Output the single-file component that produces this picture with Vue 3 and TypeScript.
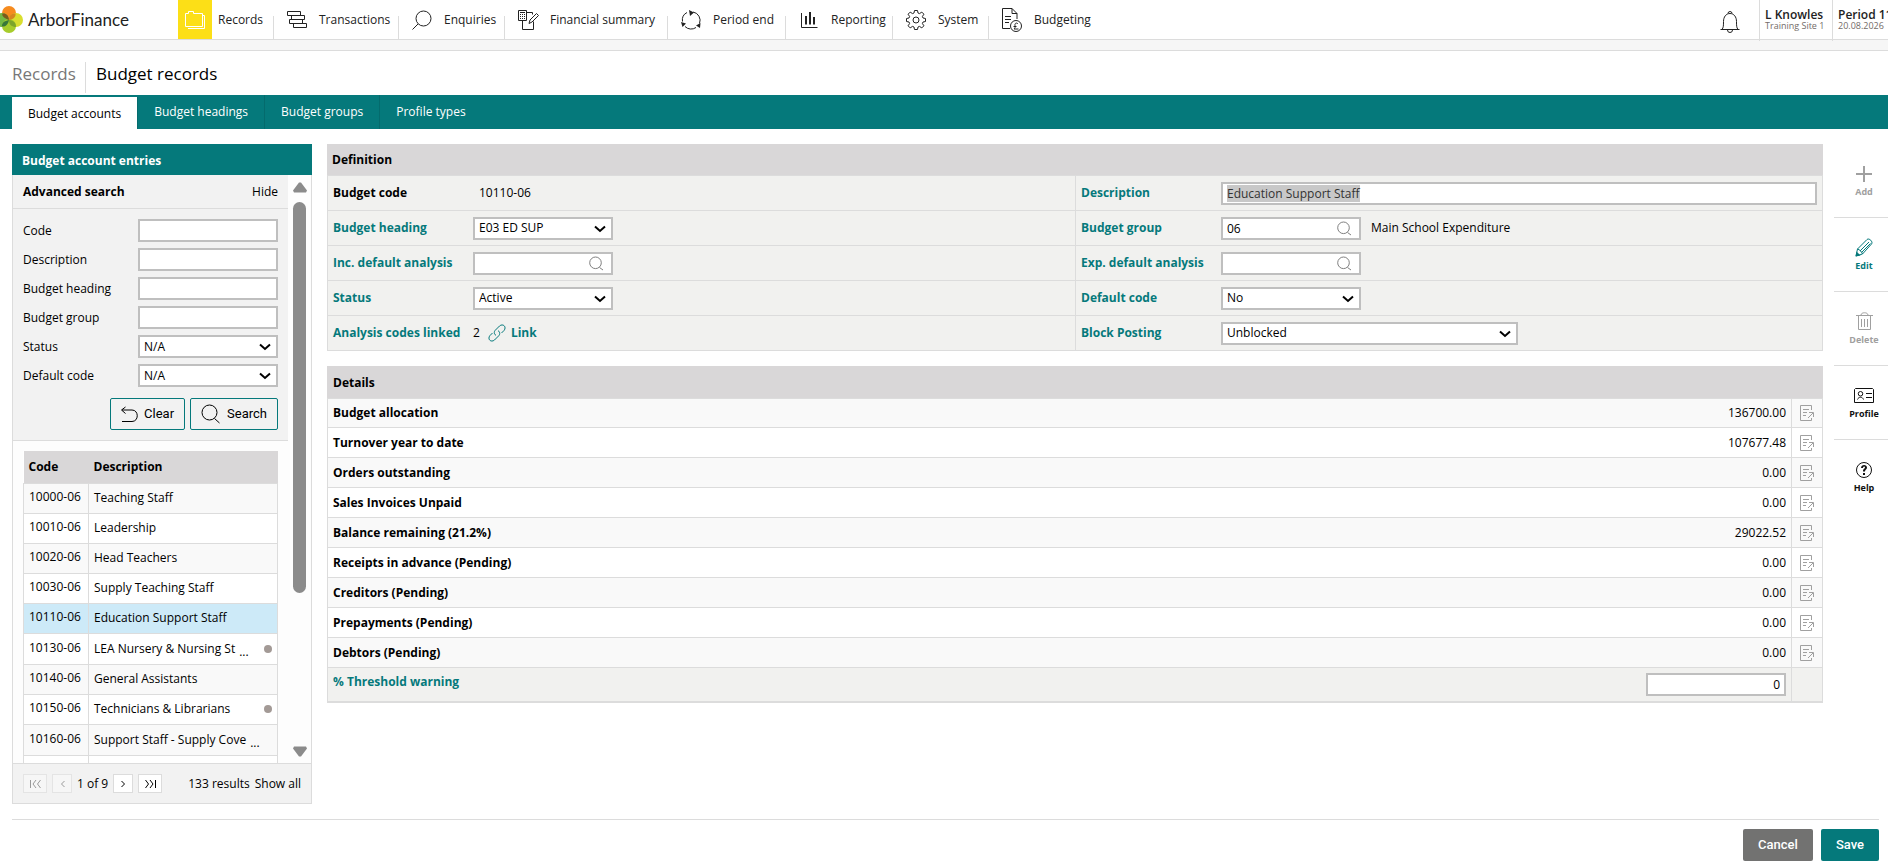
<script setup lang="ts">
import { h, onMounted, ref } from 'vue'

interface Icon { size: [number, number]; lines?: string; fills?: string }

const icons: Record<string, Icon> = {
  records: { size: [20, 18], lines: 'M.5 15.5V2.5h3v-2h5v2h9v13zM3 17.5h16.5V4.5h-2' },
  transactions: { size: [21, 17], lines: 'M.5.5h13v4h-13zM4.5 4.5h13v4h-13zM2.5 8.5h13v4h-13zM6.5 12.5h13v4h-13z' },
  enquiries: { size: [20, 20], lines: 'M11.5 1a7.5 7.5 0 1 1 0 15a7.5 7.5 0 0 1 0-15M6 14L.5 19.5' },
  summary: { size: [21, 20], lines: 'M.5.5h8v10h-8zM2 2.5h5M2 4.5h1M4 4.5h1M6 4.5h1M2 6.5h1M4 6.5h1M6 6.5h1M2 8.5h1M4 8.5h1M6 8.5h1M8.5 2.5h6v2M4.5 10.5v9h11v-8M11 13.5l1-3.5 6.5-6.5 2 2-6.500 6.500z' },
  period: { size: [20, 20], lines: 'M6 2.500a8.500 8.500 0 0 0-4.500 9M4 16.500a8.500 8.500 0 0 0 11 1M18.500 13.500a8.500 8.500 0 0 0-6.500-11.500', fills: 'M8 0l5 2.500L9 6zM0 12l5 1.500L1.500 17zM19.500 13l-.5 5-4-2.500z' },
  reporting: { size: [17, 16], lines: 'M.5 1v14.5H16.5', fills: 'M4 4h2v8.5H4zM8 0h2v12.5H8zM12 5h2v7.5h-2z' },
  system: { size: [20, 20], lines: 'M8.5.5h3l.5 2.500 1.500.6 2.300-1.500 2.100 2.100-1.500 2.300.6 1.500 2.500.5v3l-2.500.5-.6 1.500 1.500 2.300-2.100 2.100-2.300-1.500-1.500.6-.5 2.500h-3l-.5-2.500-1.500-.6-2.300 1.500-2.100-2.100 1.500-2.300-.6-1.500-2.500-.5v-3l2.500-.5.6-1.500-1.500-2.300 2.100-2.100 2.300 1.500 1.500-.6zM10 7a3 3 0 1 1 0 6a3 3 0 0 1 0-6' },
  budgeting: { size: [20, 24], lines: 'M8 20.5H.5V.5H10l5 5v5.500M10 .5v5h5M3 8.500h6M3 11.500h6M3 14.500h4M14 12.500a5.500 5.500 0 1 1 0 11a5.500 5.500 0 0 1 0-11M16 16c-1.500-2-3.500-.5-3 1.500.5 1.500 0 2.500-1 3.500h4.500M11.500 18.500h3' },
  bell: { size: [20, 24], lines: 'M.5 19.5h19M2 19.5c1.5-2 1.5-4 1.5-8C3.500 7 6 3.500 10 3.500S16.500 7 16.500 11.500c0 4 0 6 1.500 8M8 3.500a2 2 0 1 1 4 0M7.500 20a2.500 2.500 0 0 0 5 0' },
  add: { size: [16, 16], fills: 'M7 0h2v7h7v2H9v7H7V9H0V7h7z' },
  edit: { size: [19, 19], lines: 'M1 18l1.5-7L12 1.500c2-2 6.500 2.500 4.500 4.500L7.500 16zM2.500 11c2 .5 4.500 3 5 5M5 13l9-9M6.500 14.500l9-9', fills: 'M.5 18.500l1-5 4 4z' },
  delete: { size: [17, 19], lines: 'M0 3.5h17M5 3c0-3 7-3 7 0M2.5 4v13.5h12V4M5.5 7v8M8.5 7v8M11.5 7v8' },
  profile: { size: [20, 16], lines: 'M1.5.5h17l1 1v13h-19v-13zM6.5 3.5a2 2 0 1 1 0 4.5a2 2 0 0 1 0-4.5M3.5 11.5c1-3 5-3 6 0M12 5.5h6M12 9.5h6' },
  help: { size: [16, 16], lines: 'M8 .5a7.5 7.5 0 1 1 0 15a7.5 7.5 0 0 1 0-15', fills: 'M5 6c0-4 6-4 6-.5 0 2-2 2-2 4H7c0-3 2-3 2-4 0-1.500-2-1-2 .5zM7 11h2v2H7z' },
  undo: { size: [17, 16], lines: 'M4.5 1L.5 4l4 3.500M1 4h10c7 0 7 11.500 0 11.500H1' },
  search: { size: [20, 20], lines: 'M8.5 1a7.500 7.500 0 1 1 0 15a7.500 7.500 0 0 1 0-15M13.500 14.500l5 4.500' },
  lookup: { size: [15, 15], lines: 'M6.5 1a5.800 5.800 0 1 1 0 11.600a5.800 5.800 0 0 1 0-11.600M10.500 11.500l3.500 2.500' },
  link: { size: [18, 18], lines: 'M8 11.500C5.500 9.500 6 7.500 7.500 6l4-4c3.500-3 7.500 1 4.500 4.500l-2.500 2.500M10 6.500c2.500 2 2 4 .5 5.500l-4 4c-3.500 3-7.500-1-4.500-4.500l2.500-2.500' },
  note: { size: [14, 16], lines: 'M11.5 5V.5H.5v15H11.5V13M3 4.5h6M3 7.5h4M3 10.5h3M8 13l5-5M9 7.5h4.500v4.500' },
  chevron: { size: [12, 8], lines: 'M1 1.5l5 4.500 5-4.500' },
  up: { size: [14, 11], fills: 'M6 .5h2l6 8-1 2H1l-1-2z' },
  down: { size: [14, 11], fills: 'M6 10.5h2l6-8-1-2H1l-1 2z' },
  first: { size: [11, 10], lines: 'M.5 1v8M6 1L3 5l3 4M10.500 1l-3 4 3 4' },
  previous: { size: [5, 8], lines: 'M4.5 1l-3 3 3 3' },
  next: { size: [5, 8], lines: 'M.5 1l3 3-3 3' },
  last: { size: [11, 10], lines: 'M10.5 1v8M5 1l3 4-3 4M.5 1l3 4-3 4' },
}

const Glyph = (props: { name: string }) => {
  const { size: [width, height], lines, fills } = icons[props.name]
  return h('svg', { width, height, viewBox: `0 0 ${width} ${height}`, fill: 'none', 'aria-hidden': 'true', class: 'glyph' }, [
    lines ? h('path', { d: lines, stroke: 'currentColor' }) : null,
    fills ? h('path', { d: fills, fill: 'currentColor' }) : null,
  ])
}
Glyph.props = ['name']

const nav = [
  { icon: 'records', label: 'Records', active: true },
  { icon: 'transactions', label: 'Transactions' },
  { icon: 'enquiries', label: 'Enquiries' },
  { icon: 'summary', label: 'Financial summary' },
  { icon: 'period', label: 'Period end' },
  { icon: 'reporting', label: 'Reporting' },
  { icon: 'system', label: 'System' },
  { icon: 'budgeting', label: 'Budgeting' },
]
const tabs = ['Budget accounts', 'Budget headings', 'Budget groups', 'Profile types']
const filters = [
  { id: 'f-code', label: 'Code' },
  { id: 'f-description', label: 'Description' },
  { id: 'f-heading', label: 'Budget heading' },
  { id: 'f-group', label: 'Budget group' },
  { id: 'f-status', label: 'Status', option: 'N/A' },
  { id: 'f-default', label: 'Default code', option: 'N/A' },
]
const accounts = [
  { code: '10000-06', name: 'Teaching Staff' },
  { code: '10010-06', name: 'Leadership' },
  { code: '10020-06', name: 'Head Teachers' },
  { code: '10030-06', name: 'Supply Teaching Staff' },
  { code: '10110-06', name: 'Education Support Staff', selected: true },
  { code: '10130-06', name: 'LEA Nursery & Nursing St', cut: true, dot: true },
  { code: '10140-06', name: 'General Assistants' },
  { code: '10150-06', name: 'Technicians & Librarians', dot: true },
  { code: '10160-06', name: 'Support Staff - Supply Cove', cut: true },
  { code: '', name: '' },
]
const details = [
  ['Budget allocation', '136700.00'],
  ['Turnover year to date', '107677.48'],
  ['Orders outstanding', '0.00'],
  ['Sales Invoices Unpaid', '0.00'],
  ['Balance remaining (21.2%)', '29022.52'],
  ['Receipts in advance (Pending)', '0.00'],
  ['Creditors (Pending)', '0.00'],
  ['Prepayments (Pending)', '0.00'],
  ['Debtors (Pending)', '0.00'],
]
const actions = [
  { icon: 'add', label: 'Add', tone: 'muted' },
  { icon: 'edit', label: 'Edit', tone: 'teal' },
  { icon: 'delete', label: 'Delete', tone: 'muted' },
  { icon: 'profile', label: 'Profile', tone: 'dark' },
  { icon: 'help', label: 'Help', tone: 'dark' },
]

const description = ref('Education Support Staff')
const group = ref('06')
const threshold = ref('0')
const descriptionInput = ref<HTMLInputElement | null>(null)

onMounted(() => {
  descriptionInput.value?.focus()
  descriptionInput.value?.select()
})
</script>

<template>
  <div class="app">
    <header class="topbar">
      <a class="brand" href="#">
        <svg class="logo" width="23" height="28" viewBox="0 0 23 28" aria-hidden="true">
          <circle cx="9" cy="7" r="7" fill="#f68b1f" />
          <circle cx="2" cy="14" r="7" fill="#72b844" />
          <circle cx="16" cy="14" r="7" fill="#d9de2f" />
          <circle cx="9" cy="20" r="7" fill="#a7cc2c" />
          <path d="M9 14C3 12 1.500 9 2.500 7.500 6 7 8.500 9 9 14z" fill="#7a5a1c" />
          <path d="M9 14c0-5 3-7 6.500-6.500C16 11 13 13.500 9 14z" fill="#d6851f" />
          <path d="M9 14c-1 5-4 7-7 6.500C1.500 17 4 15 9 14z" fill="#37773a" />
          <path d="M9 14c5 .5 7 3 7 7-4 0-7-2-7-7z" fill="#7da52a" />
        </svg>
        <span>ArborFinance</span>
      </a>
      <nav class="nav">
        <a v-for="item in nav" :key="item.label" href="#" :class="{ active: item.active }">
          <span class="nav-icon"><Glyph :name="item.icon" /></span>
          <span>{{ item.label }}</span>
        </a>
      </nav>
      <div class="account">
        <button class="bell" type="button" aria-label="Notifications"><Glyph name="bell" /></button>
        <div class="user"><strong>L Knowles</strong><small>Training Site 1</small></div>
        <div class="user"><strong>Period 11</strong><small>20.08.2026</small></div>
      </div>
    </header>
    <div class="strip"></div>

    <div class="crumbs"><a href="#">Records</a><h1>Budget records</h1></div>
    <nav class="tabs">
      <a v-for="(tab, i) in tabs" :key="tab" href="#" :class="{ current: i === 0 }">{{ tab }}</a>
    </nav>

    <main class="content">
      <aside class="entries">
        <h2>Budget account entries</h2>
        <div class="scroller">
          <div class="scrolled">
            <form class="search" @submit.prevent>
              <div class="search-head"><strong>Advanced search</strong><a href="#">Hide</a></div>
              <div class="filters">
                <template v-for="f in filters" :key="f.id">
                  <label :for="f.id">{{ f.label }}</label>
                  <span v-if="f.option" class="field pick">
                    <select :id="f.id"><option>{{ f.option }}</option></select><Glyph name="chevron" />
                  </span>
                  <span v-else class="field"><input :id="f.id" type="text" /></span>
                </template>
              </div>
              <div class="buttons">
                <button type="reset"><Glyph name="undo" />Clear</button>
                <button type="submit"><Glyph name="search" />Search</button>
              </div>
            </form>
            <table class="accounts">
              <thead><tr><th>Code</th><th>Description</th></tr></thead>
              <tbody>
                <tr v-for="a in accounts" :key="a.code" :class="{ selected: a.selected, cut: a.cut }">
                  <td>{{ a.code }}</td>
                  <td>
                    <div class="name">
                      <span>{{ a.name }}</span><span v-if="a.cut" class="more">...</span><i v-if="a.dot" class="dot"></i>
                    </div>
                  </td>
                </tr>
              </tbody>
            </table>
          </div>
          <div class="bar"><Glyph name="up" /><span class="thumb"></span><Glyph name="down" /></div>
        </div>
        <div class="pager">
          <button type="button" disabled aria-label="First page" class="wide"><Glyph name="first" /></button>
          <button type="button" disabled aria-label="Previous page"><Glyph name="previous" /></button>
          <span>1 of 9</span>
          <button type="button" aria-label="Next page"><Glyph name="next" /></button>
          <button type="button" aria-label="Last page" class="wide"><Glyph name="last" /></button>
          <span class="results">133 results</span><a href="#">Show all</a>
        </div>
      </aside>

      <div class="record">
        <section class="panel">
          <h2>Definition</h2>
          <div class="definition">
            <div class="cell"><span class="label plain">Budget code</span><span class="value">10110-06</span></div>
            <div class="cell">
              <label class="label" for="description">Description</label>
              <span class="field grow"><input id="description" ref="descriptionInput" v-model="description" type="text" /></span>
            </div>
            <div class="cell">
              <label class="label" for="heading">Budget heading</label>
              <span class="field pick"><select id="heading"><option>E03 ED SUP</option></select><Glyph name="chevron" /></span>
            </div>
            <div class="cell">
              <label class="label" for="group">Budget group</label>
              <span class="field look"><input id="group" v-model="group" type="text" /><Glyph name="lookup" /></span>
              <span class="note">Main School Expenditure</span>
            </div>
            <div class="cell">
              <label class="label" for="income">Inc. default analysis</label>
              <span class="field look"><input id="income" type="text" /><Glyph name="lookup" /></span>
            </div>
            <div class="cell">
              <label class="label" for="expense">Exp. default analysis</label>
              <span class="field look"><input id="expense" type="text" /><Glyph name="lookup" /></span>
            </div>
            <div class="cell">
              <label class="label" for="status">Status</label>
              <span class="field pick"><select id="status"><option>Active</option></select><Glyph name="chevron" /></span>
            </div>
            <div class="cell">
              <label class="label" for="default">Default code</label>
              <span class="field pick"><select id="default"><option>No</option></select><Glyph name="chevron" /></span>
            </div>
            <div class="cell">
              <span class="label">Analysis codes linked</span><span>2</span>
              <a class="link" href="#"><Glyph name="link" />Link</a>
            </div>
            <div class="cell">
              <label class="label" for="posting">Block Posting</label>
              <span class="field pick long"><select id="posting"><option>Unblocked</option></select><Glyph name="chevron" /></span>
            </div>
          </div>
        </section>

        <section class="panel">
          <h2 class="tall">Details</h2>
          <table class="details">
            <tbody>
              <tr v-for="row in details" :key="row[0]">
                <th scope="row">{{ row[0] }}</th>
                <td>{{ row[1] }}</td>
                <td class="tool"><button type="button" :aria-label="`Open ${row[0]}`"><Glyph name="note" /></button></td>
              </tr>
              <tr class="threshold">
                <th scope="row"><label for="threshold">% Threshold warning</label></th>
                <td><span class="field number"><input id="threshold" v-model="threshold" type="text" /></span></td>
                <td class="tool"></td>
              </tr>
            </tbody>
          </table>
        </section>
      </div>

      <div class="actions">
        <button v-for="a in actions" :key="a.label" type="button" :class="a.tone">
          <span class="action-icon"><Glyph :name="a.icon" /></span>{{ a.label }}
        </button>
      </div>
    </main>

    <footer class="footer">
      <button type="button" class="cancel">Cancel</button>
      <button type="button" class="save">Save</button>
    </footer>
  </div>
</template>

<style>
body { background: #fff; }
</style>

<style scoped>
.app { font: 12px/18px "Open Sans", "Noto Sans", sans-serif; color: #000; overflow: hidden; }
.app, .app * { box-sizing: border-box; }
a { color: inherit; text-decoration: none; }
button, input, select { font: inherit; color: inherit; margin: 0; }
button { cursor: pointer; }
h1, h2 { margin: 0; font-size: 12px; line-height: 18px; }
.glyph { flex: none; display: block; }

.topbar { display: flex; height: 40px; border-bottom: 1px solid #dcdcdc; }
.brand { width: 178px; flex: none; display: flex; align-items: center; gap: 5px; font: 17px/24px Lato, sans-serif; color: #222; }
.nav { display: grid; grid-template-columns: 96px 125px 106px 163px 118px 107px 96px 110px; color: #222; }
.nav a { display: flex; align-items: center; position: relative; white-space: nowrap; }
.nav a:not(:last-child)::after { content: ""; position: absolute; right: 0; bottom: 0; height: 23px; width: 1px; background: #dcdcdc; }
.nav-icon { width: 34px; height: 39px; margin-right: 11px; padding-left: 12px; display: flex; align-items: center; justify-content: center; flex: none; }
.active .nav-icon { background: #fcdf17; color: #fff; margin-right: 6px; padding: 0; }
.account { margin-left: auto; display: flex; flex: none; width: 188px; color: #222; }
.bell { border: 0; background: none; width: 59px; flex: none; padding: 4px 19px 0 20px; display: flex; align-items: center; }
.user { width: 73px; flex: none; border-left: 1px solid #dcdcdc; padding: 8px 0 0 5px; white-space: nowrap; height: 41px; }
.user strong, .user small { display: block; }
.user strong { font-size: 12px; line-height: 13px; font-weight: 600; }
.user small { font-size: 9px; line-height: 10px; color: #736b68; }
.strip { height: 11px; background: #f6f6f6; border-bottom: 1px solid #dcdcdc; }

.crumbs { display: flex; align-items: stretch; height: 44px; padding: 11px 12px 2px; font-size: 17px; color: #777; line-height: 24px; }
.crumbs h1 { font-size: 17px; line-height: 24px; font-weight: 400; color: #000; }
.crumbs a { width: 74px; border-right: 1px solid #dcdcdc; margin-right: 10px; }

.tabs { display: flex; height: 34px; background: #05797b; padding-left: 12px; color: #fff; }
.tabs a { padding: 0 16px; line-height: 34px; border-right: 1px solid #046b6d; }
.tabs a:last-child { border: 0; }
.tabs .current { background: #fff; color: #000; margin-top: 2px; }

.content { display: flex; align-items: flex-start; padding-top: 15px; }
.entries { width: 300px; flex: none; margin: 0 15px 15px 12px; border: 1px solid #dcdcdc; border-top: 0; background: #fdfdfd; }
.entries h2 { background: #05797b; color: #fff; margin: 0 -1px; padding: 8px 10px 5px; font-weight: 700; }
.scroller { display: flex; height: 588px; overflow: hidden; }
.scrolled { width: 275px; }
.search { background: #f2f2f2; border-bottom: 1px solid #dcdcdc; padding-bottom: 10px; }
.search-head { display: flex; justify-content: space-between; padding: 8px 10px 7px; border-bottom: 1px solid #dcdcdc; }
.filters { display: grid; grid-template-columns: 115px 140px; row-gap: 6px; padding: 10px 10px 11px; align-items: center; }
.buttons { display: flex; justify-content: flex-end; gap: 5px; padding-right: 10px; font: 13px/18px Roboto, sans-serif; }
.buttons button { height: 32px; border: 1px solid #05797b; border-radius: 2px; background: #f2f2f2; padding: 0 10px; display: flex; align-items: center; gap: 6px; }

.field { display: block; position: relative; width: 140px; height: 23px; flex: none; }
.field input, .field select { width: 100%; height: 100%; border: 2px solid #bfbfbf; border-radius: 0; background: #fff; padding: 0 4px; outline: 0; display: block; appearance: none; }
.field input::selection { background: #c8c8c8; color: #333; }
.pick .glyph { position: absolute; right: 7px; top: 8px; pointer-events: none; stroke-width: 2; }
.look .glyph { position: absolute; right: 9px; top: 4px; color: #808080; }
.field.long { width: 297px; }
.field.grow { width: auto; flex: 1; }
.field.number { margin-left: auto; }
.field.number input { text-align: right; }

.accounts { width: 255px; margin: 10px 0 0 10px; border-collapse: collapse; table-layout: fixed; background: #fff; }
.accounts th { background: #d9d7d8; text-align: left; height: 32px; padding: 0 5px; font-weight: 700; }
.accounts th:first-child { width: 65px; }
.accounts td { border: 1px solid #dcdcdc; height: 30px; padding: 0 5px; white-space: nowrap; }
.accounts td:first-child { padding-bottom: 2px; }
.accounts .cut td { height: 31px; }
.accounts tbody tr:nth-child(odd) { background: #f9f9f9; }
.accounts tbody tr.selected { background: #cdeaf8; }
.name { display: flex; align-items: center; }
.more { margin-left: 4px; padding-top: 6px; line-height: 12px; }
.dot { width: 8px; height: 8px; border-radius: 50%; background: #a39a96; margin-left: auto; }
.bar { width: 23px; padding: 7px 4px 6px; display: flex; flex-direction: column; align-items: center; color: #8b8b8b; }
.thumb { width: 13px; height: 391px; border-radius: 7px; background: #8b8b8b; margin: 9px 0 auto; }
.pager { display: flex; align-items: center; gap: 5px; height: 40px; border-top: 1px solid #dcdcdc; background: #f2f2f2; padding: 0 10px; white-space: nowrap; }
.pager button { width: 20px; height: 19px; border: 1px solid #dcdcdc; background: #fff; padding: 0; display: flex; align-items: center; justify-content: center; }
.pager button.wide { width: 24px; }
.pager button:disabled { background: #f6f6f6; color: #999; border-color: #e4e4e4; }
.pager .results { margin-left: auto; }

.record { flex: 1; min-width: 0; }
.panel { margin-bottom: 15px; border: 1px solid #dcdcdc; border-top: 0; }
.panel h2 { background: #d9d7d8; margin: 0 -1px; padding: 7px 5px 6px; font-weight: 700; }
.panel h2.tall { padding: 8px 6px 6px; }
.definition { display: grid; grid-template-columns: 1fr 1fr; background: #f1f1ef; }
.cell { display: flex; align-items: center; border-top: 1px solid #dcdcdc; height: 35px; padding: 0 5px; }
.cell:nth-child(even) { border-left: 1px solid #dcdcdc; }
.cell .label { width: 140px; flex: none; }
.label, .threshold th { color: #05797b; font-weight: 700; white-space: nowrap; }
.label.plain { color: #000; }
.cell .value { padding-left: 6px; }
.note { margin-left: 10px; }
.link { display: flex; align-items: center; gap: 5px; color: #05797b; font-weight: 700; margin-left: 8px; }

.details { width: 100%; border-collapse: collapse; }
.details th, .details td { border-top: 1px solid #dcdcdc; height: 30px; padding: 0 5px; text-align: left; vertical-align: middle; }
.details tr:first-child > * { height: 29px; }
.details td { text-align: right; }
.details tr:nth-child(odd) { background: #f9f9f9; }
.details .tool { width: 30px; border-left: 1px solid #dcdcdc; padding: 0 8px; }
.tool button { display: block; border: 0; background: none; padding: 0; color: #a0a0a0; }
.details tr.threshold { background: #f1f1ef; border-bottom: 1px solid #dcdcdc; }
.details .threshold > * { height: 34px; }
.details .threshold th { padding-bottom: 5px; }

.actions { width: 54px; flex: none; margin-left: 11px; }
.actions button { width: 100%; height: 74px; display: flex; flex-direction: column; align-items: center; justify-content: center; border: 0; border-bottom: 1px solid #dcdcdc; background: none; padding: 0 0 0 6px; font: 700 9px/14px "Open Sans", sans-serif; }
.actions button:last-child { border: 0; }
.action-icon { height: 22px; display: flex; align-items: center; }
.actions .muted { color: #a0a0a0; }
.actions .teal { color: #05797b; }
.actions .dark { color: #111; }

.footer { display: flex; justify-content: flex-end; gap: 8px; border-top: 1px solid #dcdcdc; margin: 0 9px 0 12px; padding: 9px 0 3px; }
.footer button { height: 32px; border: 0; border-radius: 2px; color: #fff; padding: 0 15px; font: 500 13px/20px Roboto, sans-serif; }
.cancel { background: #727271; }
.save { background: #05797b; }
</style>
